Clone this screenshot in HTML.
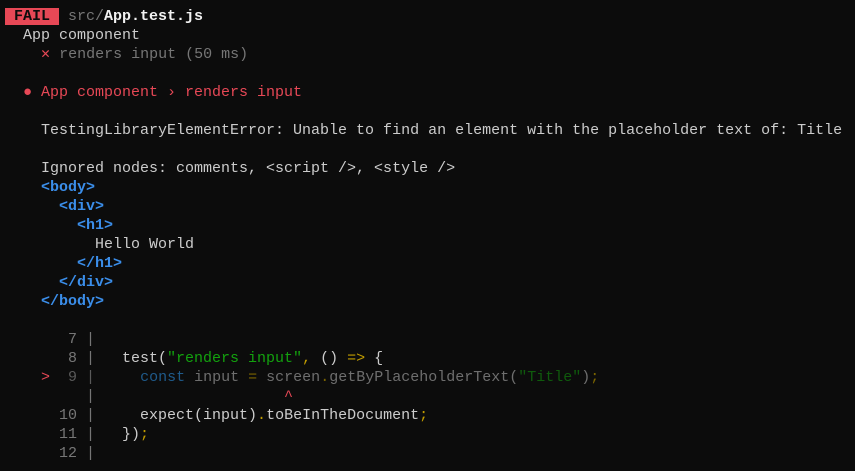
<!DOCTYPE html>
<html><head><meta charset="utf-8"><style>
html,body{margin:0;padding:0;background:#0c0c0c;width:855px;height:471px;overflow:hidden}
pre{margin:0;position:absolute;left:5px;top:7px;font-family:"Liberation Mono","DejaVu Sans Mono",monospace;font-size:15px;line-height:19px;color:#cccccc;letter-spacing:0}
.b{background:#e74856;color:#0c0c0c;font-weight:bold}
.g{color:#767676}.w{color:#f2f2f2;font-weight:bold}
.r{color:#e74856}.bl{color:#3b8eea;font-weight:bold}
.gr{color:#13a10e}.y{color:#c19c00}
.dg{color:#5a5a5a}.db{color:#1f5a8a}.dgr{color:#0f5a0c}.dy{color:#7a6400}.dt{color:#6e6e6e}
</style></head><body><pre><span class="b"> FAIL </span> <span class="g">src/</span><span class="w">App.test.js</span>
  App component
    <span class="r">✕</span> <span class="g">renders input (50 ms)</span>

  <span class="r">● App component › renders input</span>

    TestingLibraryElementError: Unable to find an element with the placeholder text of: Title

    Ignored nodes: comments, &lt;script /&gt;, &lt;style /&gt;
    <span class="bl">&lt;body&gt;</span>
      <span class="bl">&lt;div&gt;</span>
        <span class="bl">&lt;h1&gt;</span>
          Hello World
        <span class="bl">&lt;/h1&gt;</span>
      <span class="bl">&lt;/div&gt;</span>
    <span class="bl">&lt;/body&gt;</span>

<span class="g">       7 |</span>
<span class="g">       8 |</span>   test(<span class="gr">"renders input"</span><span class="y">,</span> () <span class="y">=&gt;</span> {
    <span class="r">&gt;</span>  <span class="dg">9 |</span>     <span class="db">const</span> <span class="dt">input</span> <span class="dy">=</span> <span class="dt">screen</span><span class="dy">.</span><span class="dt">getByPlaceholderText(</span><span class="dgr">"Title"</span><span class="dt">)</span><span class="dy">;</span>
<span class="g">         |</span>                     <span class="r">^</span>
<span class="g">      10 |</span>     expect(input)<span class="y">.</span>toBeInTheDocument<span class="y">;</span>
<span class="g">      11 |</span>   })<span class="y">;</span>
<span class="g">      12 |</span></pre></body></html>
